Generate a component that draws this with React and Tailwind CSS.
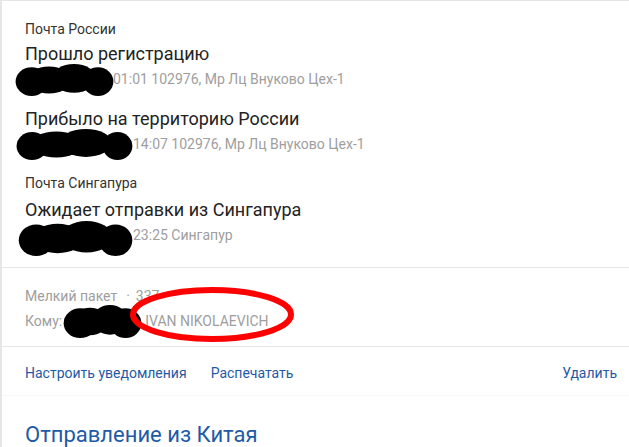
import React from 'react';

const font = { fontFamily: 'Roboto, "Liberation Sans", sans-serif' };

// black marker scribble over redacted dates / names
const Blob = ({ w, h }) => (
  <svg width={w} height={h} viewBox={`0 0 ${w} ${h}`}>
    <ellipse cx={h * 0.55} cy={h * 0.55} rx={h * 0.5} ry={h * 0.45} fill="#000" />
    <ellipse cx={w * 0.35} cy={h * 0.5} rx={w * 0.22} ry={h * 0.42} fill="#000" />
    <ellipse cx={w * 0.6} cy={h * 0.45} rx={w * 0.22} ry={h * 0.45} fill="#000" />
    <ellipse cx={w - h * 0.5} cy={h * 0.55} rx={h * 0.48} ry={h * 0.45} fill="#000" />
  </svg>
);

export default function App() {
  return (
    <div className="w-[629px] h-[447px] overflow-hidden bg-white" style={font}>
      <div className="border-l-2 border-[#e6e6e6]">
        <div className="border-t border-[#e6e6e6]">
          <div className="pl-[23px] pt-[18px] pb-[19px] flex flex-col">
            <div className="text-[14px] leading-[20px] text-[#333]">Почта России</div>
            <div className="text-[18px] leading-[24px] text-[#222] mt-[3px]">Прошло регистрацию</div>
            <div className="relative h-[26px] text-[14px] leading-[26px] text-[#9e9e9e]">
              <span className="absolute top-0 left-[88px]">01:01 102976, Мр Лц Внуково Цех-1</span>
              <div className="absolute left-[-11px] top-[-2px]"><Blob w={100} h={32} /></div>
            </div>
            <div className="text-[18px] leading-[24px] text-[#222] mt-[15px]">Прибыло на территорию России</div>
            <div className="relative h-[26px] text-[14px] leading-[26px] text-[#9e9e9e]">
              <span className="absolute top-0 left-[108px]">14:07 102976, Мр Лц Внуково Цех-1</span>
              <div className="absolute left-[-10px] top-[-2px]"><Blob w={118} h={31} /></div>
            </div>
            <div className="text-[14px] leading-[20px] text-[#333] mt-[16px]">Почта Сингапура</div>
            <div className="text-[18px] leading-[24px] text-[#222] mt-[5px]">Ожидает отправки из Сингапура</div>
            <div className="relative h-[26px] text-[14px] leading-[26px] text-[#9e9e9e]">
              <span className="absolute top-0 left-[108px]">23:25 Сингапур</span>
              <div className="absolute left-[-8px] top-[-1px]"><Blob w={116} h={35} /></div>
            </div>
          </div>
        </div>
        <div className="border-t border-[#e6e6e6] pl-[23px] pt-[16px] pb-[13px] relative">
          <div className="text-[14px] leading-[24px] text-[#9e9e9e] flex">
            <span>Мелкий пакет</span>
            <span className="ml-[9px]">·</span>
            <span className="ml-[6px]">337</span>
          </div>
          <div className="text-[14px] leading-[24px] text-[#9e9e9e] flex mt-[1px]">
            <span>Кому:</span>
            <span className="w-[83px]" />
            <span>IVAN NIKOLAEVICH</span>
          </div>
          <div className="absolute left-[60px] top-[37px]"><Blob w={80} h={33} /></div>
          <svg className="absolute left-[127px] top-[18px]" width="166" height="57" viewBox="0 0 166 57">
            <ellipse cx="83" cy="28.5" rx="79" ry="24.5" fill="none" stroke="#f00" strokeWidth="6" />
          </svg>
        </div>
        <div className="border-t border-[#e6e6e6] h-[49px] pt-[5px] pl-[23px] pr-[12px] flex items-center text-[14px] text-[#1f5aa6]">
          <span>Настроить уведомления</span>
          <span className="ml-[24px]">Распечатать</span>
          <span className="ml-auto">Удалить</span>
        </div>
        <div className="border-t border-[#f6f6f6] pl-[23px] pt-[25px] text-[22px] leading-[28px] text-[#1f5aa6]">
          Отправление из Китая
        </div>
      </div>
    </div>
  );
}
